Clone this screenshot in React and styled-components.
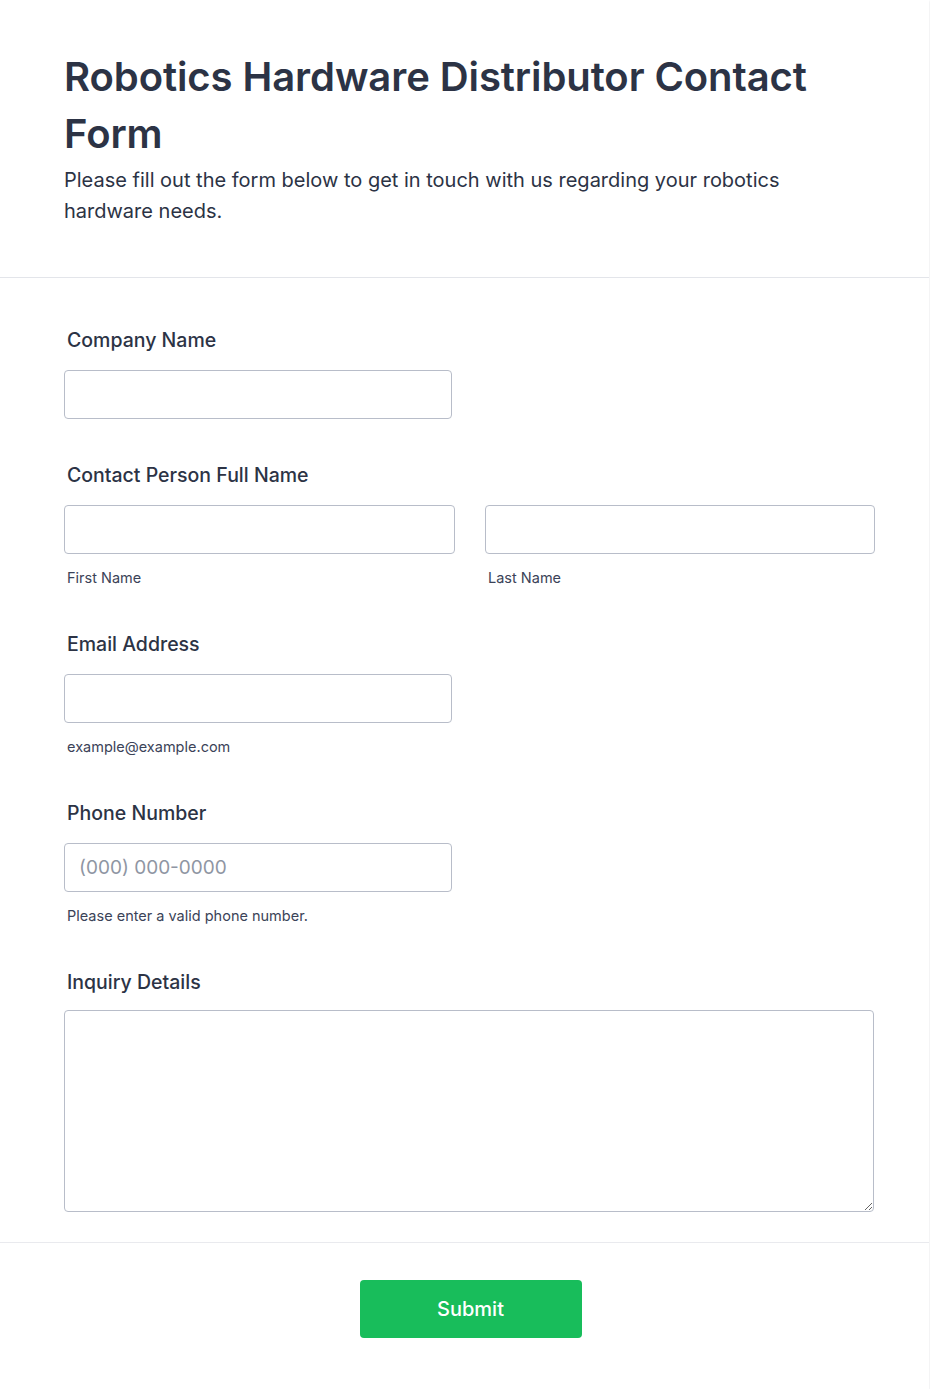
import React from "react";
import styled, { createGlobalStyle } from "styled-components";

const GlobalStyle = createGlobalStyle`
  html, body {
    margin: 0;
    padding: 0;
    background: #ffffff;
  }
  body {
    font-family: Inter, "Noto Sans", sans-serif;
    color: #2c3345;
  }
  * {
    box-sizing: border-box;
  }
`;

function Field({ label, sublabel, tight, children }) {
  return (
    <FieldWrap>
      <Label tight={tight}>{label}</Label>
      {children}
      {sublabel && <SubLabel>{sublabel}</SubLabel>}
    </FieldWrap>
  );
}

function App() {
  return (
    <>
      <GlobalStyle />
      <Card>
        <Header>
          <Title>Robotics Hardware Distributor Contact Form</Title>
          <Subtitle>
            Please fill out the form below to get in touch with us regarding
            your robotics hardware needs.
          </Subtitle>
        </Header>
        <FormBody>
          <Field label="Company Name">
            <Input narrow />
          </Field>
          <FieldWrap>
            <Label>Contact Person Full Name</Label>
            <TwoCol>
              <div>
                <Input />
                <SubLabel>First Name</SubLabel>
              </div>
              <div>
                <Input />
                <SubLabel>Last Name</SubLabel>
              </div>
            </TwoCol>
          </FieldWrap>
          <Field label="Email Address" sublabel="example@example.com">
            <Input narrow />
          </Field>
          <Field label="Phone Number" sublabel="Please enter a valid phone number.">
            <Input narrow placeholder="(000) 000-0000" />
          </Field>
          <Field label="Inquiry Details" tight>
            <TextArea />
          </Field>
        </FormBody>
        <Footer>
          <SubmitButton>Submit</SubmitButton>
        </Footer>
      </Card>
    </>
  );
}

export default App;

const Card = styled.div`
  width: 929px;
  min-height: 1389px;
  background: #ffffff;
  box-shadow: 1px 1px 2px rgba(40, 50, 70, 0.08);
`;

const Header = styled.div`
  padding: 48px 55px 50px 64px;
  border-bottom: 1px solid #e3e5ea;
`;

const Title = styled.h1`
  margin: 0;
  font-size: 40px;
  line-height: 57px;
  font-weight: 600;
  letter-spacing: -0.08px;
  color: #2c3345;
`;

const Subtitle = styled.p`
  margin: 3px 0 0;
  max-width: 790px;
  font-size: 20px;
  line-height: 31px;
  font-weight: 400;
  color: #2c3345;
`;

const FormBody = styled.div`
  padding: 48px 55px 30px 64px;
  display: flex;
  flex-direction: column;
  gap: 42px;
  border-bottom: 1px solid #e9eaee;
`;

const FieldWrap = styled.div`
  display: flex;
  flex-direction: column;
`;

const Label = styled.label`
  display: block;
  padding-left: 3px;
  margin-bottom: ${(p) => (p.tight ? "14px" : "16px")};
  font-size: 19.5px;
  line-height: 28px;
  font-weight: 500;
  color: #2c3345;
`;

const SubLabel = styled.div`
  padding-left: 3px;
  margin-top: 14px;
  font-size: 14.5px;
  line-height: 20px;
  color: #3b4358;
`;

const TwoCol = styled.div`
  display: grid;
  grid-template-columns: 391px 390px;
  column-gap: 30px;
`;

const Input = styled.input`
  display: block;
  width: ${(p) => (p.narrow ? "388px" : "100%")};
  height: 49px;
  padding: 0 14px;
  border: 1px solid #b8bdc9;
  border-radius: 4px;
  background: #ffffff;
  font-family: Inter, "Noto Sans", sans-serif;
  font-size: 19px;
  color: #2c3345;
  outline: none;
  &::placeholder {
    color: #8f96a3;
  }
`;

const TextArea = styled.textarea`
  display: block;
  width: 100%;
  height: 202px;
  padding: 12px 14px;
  border: 1px solid #b8bdc9;
  border-radius: 4px;
  background: #ffffff;
  font-family: Inter, "Noto Sans", sans-serif;
  font-size: 18px;
  resize: vertical;
  outline: none;
`;

const Footer = styled.div`
  display: flex;
  justify-content: center;
  padding: 37px 0 50px 12px;
`;

const SubmitButton = styled.button`
  width: 222px;
  height: 58px;
  border: none;
  border-radius: 4px;
  background: #18bd5b;
  color: #ffffff;
  font-family: Inter, "Noto Sans", sans-serif;
  font-size: 20px;
  font-weight: 500;
  cursor: pointer;
`;
